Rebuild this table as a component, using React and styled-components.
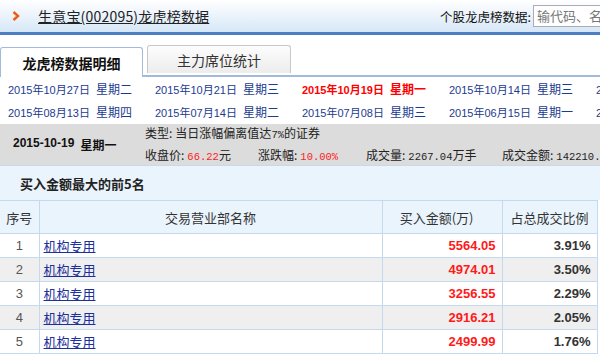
import React from "react";
import styled, { createGlobalStyle } from "styled-components";

const GlobalStyle = createGlobalStyle`
  html, body {
    margin: 0;
    padding: 0;
    background: #fff;
    overflow: hidden;
  }
  body {
    font-family: "Noto Sans CJK SC", "Liberation Sans", sans-serif;
    font-size: 12px;
    color: #333;
  }
`;

const Page = styled.div`
  width: 600px;
  height: 354px;
  overflow: hidden;
`;

const Header = styled.header`
  display: flex;
  align-items: center;
  justify-content: space-between;
  height: 32px;
  background: linear-gradient(#ffffff, #d6e7f7);
  border-bottom: 3px solid #4d7dc2;
`;

const TitleWrap = styled.div`
  display: flex;
  align-items: center;
  padding-left: 11px;
`;

const Chevron = styled.svg`
  width: 10px;
  height: 10px;
  margin-right: 17px;
`;

const Title = styled.a`
  font-size: 14px;
  color: #222;
  text-decoration: underline;
  letter-spacing: 0.2px;
`;

const Search = styled.div`
  display: flex;
  align-items: center;
  flex-shrink: 0;
  width: 160px;
  font-size: 12.5px;
  color: #111;
  white-space: nowrap;
  overflow: hidden;
`;

const SearchInput = styled.div`
  width: 80px;
  flex-shrink: 0;
  height: 20px;
  margin-left: 2px;
  border: 1px solid #aab;
  border-right: none;
  background: #fff;
  color: #777;
  font-size: 13px;
  line-height: 20px;
  padding-left: 3px;
  white-space: nowrap;
  overflow: hidden;
`;

const TabBar = styled.div`
  display: flex;
  align-items: flex-end;
  gap: 4px;
  height: 30px;
  margin-top: 10px;
  border-bottom: 2px solid #a3badf;
  padding-right: 3px;
`;

const Tab = styled.div`
  width: ${(p) => (p.$active ? "143px" : "144px")};
  height: ${(p) => (p.$active ? "30px" : "28px")};
  box-sizing: border-box;
  display: flex;
  align-items: center;
  justify-content: center;
  font-size: 14px;
  border: 1px solid ${(p) => (p.$active ? "#a3badf" : "#c8c8c8")};
  border-bottom: none;
  background: ${(p) => (p.$active ? "#fff" : "linear-gradient(#fdfdfd, #ececec)")};
  font-weight: ${(p) => (p.$active ? 700 : 400)};
  color: ${(p) => (p.$active ? "#111" : "#333")};
  margin-bottom: ${(p) => (p.$active ? "-2px" : "2px")};
  border-radius: 3px 3px 0 0;
`;

const DateGrid = styled.div`
  display: grid;
  grid-template-columns: repeat(5, 147px);
  grid-auto-rows: 23px;
  padding: 0 0 1px 8px;
`;

const DateLink = styled.a`
  display: flex;
  align-items: center;
  gap: 6px;
  white-space: nowrap;
  font-size: 11px;
  color: ${(p) => (p.$current ? "#ff0000" : "#1c3b8f")};
  font-weight: ${(p) => (p.$current ? 700 : 400)};
  font-family: "Liberation Sans", "Noto Sans CJK SC", sans-serif;
`;

const Week = styled.span`
  font-family: "Noto Sans CJK SC", sans-serif;
  font-size: 12px;
`;

const InfoBar = styled.div`
  display: flex;
  align-items: center;
  height: 41px;
  background: #dcdcdc;
  border-bottom: 1px solid #c9d9ea;
`;

const InfoDate = styled.div`
  width: 132px;
  flex-shrink: 0;
  padding-left: 13px;
  font-weight: 700;
  font-size: 12px;
  color: #111;
  white-space: nowrap;
  display: flex;
  gap: 6px;
  font-family: "Liberation Sans", "Noto Sans CJK SC", sans-serif;
`;

const InfoBody = styled.div`
  display: flex;
  flex-direction: column;
  gap: 2px;
  font-size: 12px;
  color: #222;
  white-space: nowrap;
`;

const InfoRow = styled.div`
  display: flex;
  line-height: 18px;
`;

const InfoItem = styled.span`
  width: ${(p) => p.$w || "auto"};
  flex-shrink: 0;
`;

const Colon = styled.span`
  margin-right: 3px;
`;

const Mono = styled.span`
  font-family: "Liberation Mono", monospace;
  font-size: 10.5px;
  color: ${(p) => (p.$red ? "#ff2020" : "#222")};
`;

const Section = styled.div`
  height: 34px;
  display: flex;
  align-items: center;
  padding-left: 20px;
  background: #eaf4fd;
  font-size: 13px;
  font-weight: 700;
  color: #222;
`;

const Table = styled.table`
  width: 597px;
  border-collapse: collapse;
  table-layout: fixed;
`;

const Th = styled.th`
  height: 32px;
  background: #eaf4fd;
  border: 1px solid #c5d9ee;
  border-left: ${(p) => (p.$first ? "none" : "1px solid #c5d9ee")};
  font-weight: 400;
  font-size: 13px;
  color: #333;
  text-align: ${(p) => p.$align || "center"};
  padding: ${(p) => (p.$align === "right" ? "0 28px 0 0" : "0")};
`;

const Tr = styled.tr`
  background: ${(p) => (p.$alt ? "#efefef" : "#fff")};
`;

const Td = styled.td`
  height: 23px;
  border: 1px solid #c5d9ee;
  border-left: ${(p) => (p.$first ? "none" : "1px solid #c5d9ee")};
  padding: 0 ${(p) => (p.$align === "right" ? "6px" : "4px")};
  text-align: ${(p) => p.$align || "left"};
  font-family: "Liberation Sans", "Noto Sans CJK SC", sans-serif;
  font-size: 13px;
  color: ${(p) => p.$color || "#333"};
  font-weight: ${(p) => (p.$bold ? 700 : 400)};
`;

const NameLink = styled.a`
  color: #1c2f9a;
  text-decoration: underline;
  font-family: "Noto Sans CJK SC", sans-serif;
  font-size: 13px;
`;

const dates = [
  ["2015年10月27日", "星期二"],
  ["2015年10月21日", "星期三"],
  ["2015年10月19日", "星期一", true],
  ["2015年10月14日", "星期三"],
  ["2015年10月12日", "星期一"],
  ["2015年08月13日", "星期四"],
  ["2015年07月14日", "星期二"],
  ["2015年07月08日", "星期三"],
  ["2015年06月15日", "星期一"],
  ["2015年06月12日", "星期五"],
];

const rows = [
  ["1", "机构专用", "5564.05", "3.91%"],
  ["2", "机构专用", "4974.01", "3.50%"],
  ["3", "机构专用", "3256.55", "2.29%"],
  ["4", "机构专用", "2916.21", "2.05%"],
  ["5", "机构专用", "2499.99", "1.76%"],
];

export default function App() {
  return (
    <Page>
      <GlobalStyle />
      <Header>
        <TitleWrap>
          <Chevron viewBox="0 0 10 10">
            <path d="M2.5 1 L7 5 L2.5 9" fill="none" stroke="#f05a14" strokeWidth="2.4" />
          </Chevron>
          <Title>生意宝(002095)龙虎榜数据</Title>
        </TitleWrap>
        <Search>
          个股龙虎榜数据:
          <SearchInput>输代码、名称</SearchInput>
        </Search>
      </Header>
      <TabBar>
        <Tab $active>龙虎榜数据明细</Tab>
        <Tab>主力席位统计</Tab>
      </TabBar>
      <DateGrid>
        {dates.map(([d, w, cur]) => (
          <DateLink key={d} $current={cur}>
            {d}
            <Week>{w}</Week>
          </DateLink>
        ))}
      </DateGrid>
      <InfoBar>
        <InfoDate>
          2015-10-19 <span>星期一</span>
        </InfoDate>
        <InfoBody>
          <InfoRow>
            <span>
              类型<Colon>:</Colon>当日涨幅偏离值达<Mono>7%</Mono>的证券
            </span>
          </InfoRow>
          <InfoRow>
            <InfoItem $w="113px">
              收盘价<Colon>:</Colon>
              <Mono $red>66.22</Mono>元
            </InfoItem>
            <InfoItem $w="108px">
              涨跌幅<Colon>:</Colon>
              <Mono $red>10.00%</Mono>
            </InfoItem>
            <InfoItem $w="136px">
              成交量<Colon>:</Colon>
              <Mono>2267.04</Mono>万手
            </InfoItem>
            <InfoItem>
              成交金额<Colon>:</Colon>
              <Mono>142210.</Mono>
            </InfoItem>
          </InfoRow>
        </InfoBody>
      </InfoBar>
      <Section>买入金额最大的前5名</Section>
      <Table>
        <colgroup>
          <col style={{ width: 39 }} />
          <col style={{ width: 343 }} />
          <col style={{ width: 120 }} />
          <col style={{ width: 95 }} />
        </colgroup>
        <thead>
          <tr>
            <Th $first>序号</Th>
            <Th>交易营业部名称</Th>
            <Th $align="right">买入金额(万)</Th>
            <Th>占总成交比例</Th>
          </tr>
        </thead>
        <tbody>
          {rows.map(([n, name, amt, pct], i) => (
            <Tr key={n} $alt={i % 2 === 1}>
              <Td $first $align="center" $color="#555">
                {n}
              </Td>
              <Td>
                <NameLink>{name}</NameLink>
              </Td>
              <Td $align="right" $color="#ff1a1a" $bold>
                {amt}
              </Td>
              <Td $align="right" $color="#333" $bold>
                {pct}
              </Td>
            </Tr>
          ))}
        </tbody>
      </Table>
    </Page>
  );
}
